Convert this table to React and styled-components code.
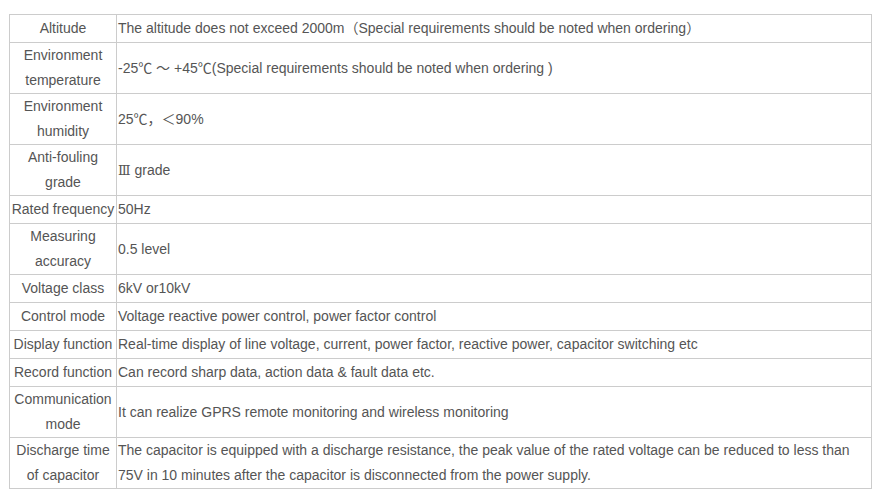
import React from "react";
import styled, { createGlobalStyle } from "styled-components";

const Global = createGlobalStyle`
  html, body { margin: 0; padding: 0; background: #fff; }
  body { font-family: "Liberation Sans", Arial, "Noto Sans CJK SC", sans-serif; }
`;

const Page = styled.div`
  padding: 14px 0 0 9px;
`;

const Table = styled.table`
  border-collapse: collapse;
  width: 863px;
  font-size: 14px;
  line-height: 25px;
  color: #555;
  table-layout: fixed;
`;

const Row = styled.tr``;

const Cell = styled.td`
  border: 1px solid #ccc;
  padding: 0 1px;
  height: 27px;
  vertical-align: middle;
  text-align: ${(p) => (p.$label ? "center" : "left")};
  width: ${(p) => (p.$label ? "104px" : "auto")};
`;

const Roman = styled.span`
  font-family: "DejaVu Serif", "Liberation Serif", "Noto Sans CJK SC", serif;
  font-size: 13px;
`;

const rows = [
  ["Altitude", "The altitude does not exceed 2000m（Special requirements should be noted when ordering）"],
  [<>Environment<br />temperature</>, "-25℃ ～ +45℃(Special requirements should be noted when ordering )"],
  [<>Environment<br />humidity</>, "25℃，＜90%"],
  [<>Anti-fouling<br />grade</>, <><Roman>Ⅲ</Roman> grade</>],
  ["Rated frequency", "50Hz"],
  [<>Measuring<br />accuracy</>, "0.5 level"],
  ["Voltage class", "6kV or10kV"],
  ["Control mode", "Voltage reactive power control, power factor control"],
  ["Display function", "Real-time display of line voltage, current, power factor, reactive power, capacitor switching etc"],
  ["Record function", "Can record sharp data, action data & fault data etc."],
  [<>Communication<br />mode</>, "It can realize GPRS remote monitoring and wireless monitoring"],
  [
    <>Discharge time<br />of capacitor</>,
    "The capacitor is equipped with a discharge resistance, the peak value of the rated voltage can be reduced to less than 75V in 10 minutes after the capacitor is disconnected from the power supply.",
  ],
];

export default function App() {
  return (
    <Page>
      <Global />
      <Table>
        <tbody>
          {rows.map(([label, value], i) => (
            <Row key={i}>
              <Cell $label>{label}</Cell>
              <Cell>{value}</Cell>
            </Row>
          ))}
        </tbody>
      </Table>
    </Page>
  );
}
